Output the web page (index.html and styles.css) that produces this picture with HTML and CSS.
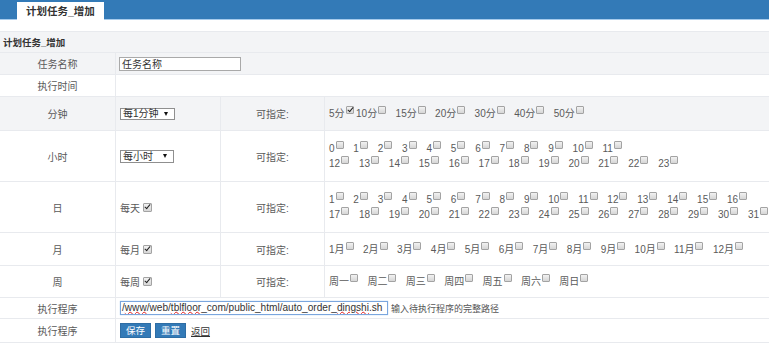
FILE: index.html
```html
<!DOCTYPE html>
<html>
<head>
<meta charset="utf-8">
<title>计划任务_增加</title>
<link rel="stylesheet" href="styles.css">
</head>
<body>
<div class="topbar">
	<div class="tab">计划任务_增加</div>
</div>

<div class="form">
	<div class="row head"><div class="cell">计划任务_增加</div></div>

	<div class="row h22 grey">
		<div class="cell lbl">任务名称</div>
		<div class="cell wide"><input class="txt" type="text" value="任务名称"></div>
	</div>

	<div class="row h22">
		<div class="cell lbl">执行时间</div>
		<div class="cell wide"></div>
	</div>

	<div class="row h34 grey">
		<div class="cell lbl">分钟</div>
		<div class="cell ctl"><span class="sel sel_min">每1分钟</span></div>
		<div class="cell lbl">可指定:</div>
		<div class="cell opts cn">
			<div class="line"><span class="o tight">5分<span class="cb on"></span></span><span class="o">10分<span class="cb"></span></span><span class="o">15分<span class="cb"></span></span><span class="o">20分<span class="cb"></span></span><span class="o">30分<span class="cb"></span></span><span class="o">40分<span class="cb"></span></span><span class="o">50分<span class="cb"></span></span></div>
		</div>
	</div>

	<div class="row h51">
		<div class="cell lbl">小时</div>
		<div class="cell ctl"><span class="sel sel_hour">每小时</span></div>
		<div class="cell lbl">可指定:</div>
		<div class="cell opts num">
			<div class="line"><span class="o">0<span class="cb"></span></span><span class="o">1<span class="cb"></span></span><span class="o">2<span class="cb"></span></span><span class="o">3<span class="cb"></span></span><span class="o">4<span class="cb"></span></span><span class="o">5<span class="cb"></span></span><span class="o">6<span class="cb"></span></span><span class="o">7<span class="cb"></span></span><span class="o">8<span class="cb"></span></span><span class="o">9<span class="cb"></span></span><span class="o">10<span class="cb"></span></span><span class="o">11<span class="cb"></span></span></div>
			<div class="line"><span class="o">12<span class="cb"></span></span><span class="o">13<span class="cb"></span></span><span class="o">14<span class="cb"></span></span><span class="o">15<span class="cb"></span></span><span class="o">16<span class="cb"></span></span><span class="o">17<span class="cb"></span></span><span class="o">18<span class="cb"></span></span><span class="o">19<span class="cb"></span></span><span class="o">20<span class="cb"></span></span><span class="o">21<span class="cb"></span></span><span class="o">22<span class="cb"></span></span><span class="o">23<span class="cb"></span></span></div>
		</div>
	</div>

	<div class="row h51">
		<div class="cell lbl">日</div>
		<div class="cell ctl">每天 <span class="cb on"></span></div>
		<div class="cell lbl">可指定:</div>
		<div class="cell opts num">
			<div class="line"><span class="o">1<span class="cb"></span></span><span class="o">2<span class="cb"></span></span><span class="o">3<span class="cb"></span></span><span class="o">4<span class="cb"></span></span><span class="o">5<span class="cb"></span></span><span class="o">6<span class="cb"></span></span><span class="o">7<span class="cb"></span></span><span class="o">8<span class="cb"></span></span><span class="o">9<span class="cb"></span></span><span class="o">10<span class="cb"></span></span><span class="o">11<span class="cb"></span></span><span class="o">12<span class="cb"></span></span><span class="o">13<span class="cb"></span></span><span class="o">14<span class="cb"></span></span><span class="o">15<span class="cb"></span></span><span class="o">16<span class="cb"></span></span></div>
			<div class="line"><span class="o">17<span class="cb"></span></span><span class="o">18<span class="cb"></span></span><span class="o">19<span class="cb"></span></span><span class="o">20<span class="cb"></span></span><span class="o">21<span class="cb"></span></span><span class="o">22<span class="cb"></span></span><span class="o">23<span class="cb"></span></span><span class="o">24<span class="cb"></span></span><span class="o">25<span class="cb"></span></span><span class="o">26<span class="cb"></span></span><span class="o">27<span class="cb"></span></span><span class="o">28<span class="cb"></span></span><span class="o">29<span class="cb"></span></span><span class="o">30<span class="cb"></span></span><span class="o">31<span class="cb"></span></span></div>
		</div>
	</div>

	<div class="row h33">
		<div class="cell lbl">月</div>
		<div class="cell ctl">每月 <span class="cb on"></span></div>
		<div class="cell lbl">可指定:</div>
		<div class="cell opts cn">
			<div class="line"><span class="o">1月<span class="cb"></span></span><span class="o">2月<span class="cb"></span></span><span class="o">3月<span class="cb"></span></span><span class="o">4月<span class="cb"></span></span><span class="o">5月<span class="cb"></span></span><span class="o">6月<span class="cb"></span></span><span class="o">7月<span class="cb"></span></span><span class="o">8月<span class="cb"></span></span><span class="o">9月<span class="cb"></span></span><span class="o">10月<span class="cb"></span></span><span class="o">11月<span class="cb"></span></span><span class="o">12月<span class="cb"></span></span></div>
		</div>
	</div>

	<div class="row h32">
		<div class="cell lbl">周</div>
		<div class="cell ctl">每周 <span class="cb on"></span></div>
		<div class="cell lbl">可指定:</div>
		<div class="cell opts cn">
			<div class="line"><span class="o">周一<span class="cb"></span></span><span class="o">周二<span class="cb"></span></span><span class="o">周三<span class="cb"></span></span><span class="o">周四<span class="cb"></span></span><span class="o">周五<span class="cb"></span></span><span class="o">周六<span class="cb"></span></span><span class="o">周日<span class="cb"></span></span></div>
		</div>
	</div>

	<div class="row h21">
		<div class="cell lbl">执行程序</div>
		<div class="cell wide ctl">
			<span class="path">/<span class="sp">www</span>/web/<span class="sp">tblfloor</span>_com/public_html/auto_order_<span class="sp">dingshi</span>.sh</span>
			<span class="hint">输入待执行程序的完整路径</span>
		</div>
	</div>

	<div class="row h24">
		<div class="cell lbl">执行程序</div>
		<div class="cell wide ctl">
			<button type="button" class="btn">保存</button>
			<button type="button" class="btn">重置</button>
			<a href="#" class="back">返回</a>
		</div>
	</div>
</div>
</body>
</html>
```
FILE: styles.css
```css
body {
	margin: 0;
	font-family: "Liberation Sans", "Noto Sans CJK SC", sans-serif;
	font-size: 10px;
	color: #5a5a5a;
	background: #fff;
}
.topbar {
	height: 19px;
	background: #337ab7;
	border-bottom: 1px solid #a7cbec;
	display: flex;
	align-items: flex-end;
	padding-left: 17px;
}
.tab {
	width: 87px;
	height: 18px;
	box-sizing: border-box;
	background: #fff;
	padding-left: 9px;
	font-size: 10.5px;
	font-weight: bold;
	color: #333;
	line-height: 18px;
	margin-bottom: -1px;
}
.form {
	margin-top: 11px;
	border-top: 1px solid #e8eaee;
}
.row {
	display: grid;
	grid-template-columns: 115px 105px 104px 1fr;
	border-bottom: 1px solid #e8eaee;
	box-sizing: border-box;
}
.grey {
	background: #f3f4f6;
}
.head {
	display: block;
	height: 21px;
	background: #f3f4f6;
}
.head .cell {
	border: 0;
	padding-left: 3px;
	font-size: 9.5px;
	font-weight: bold;
	color: #333;
	height: 20px;
}
.h22 { height: 22px; }
.h34 { height: 34px; }
.h51 { height: 51px; }
.h33 { height: 33px; }
.h32 { height: 32px; }
.h21 { height: 21px; }
.h24 { height: 24px; }
.cell {
	display: flex;
	align-items: center;
	border-left: 1px solid #e8eaee;
	min-width: 0;
}
.cell:first-child {
	border-left: 0;
}
.wide {
	grid-column: span 3;
}
.lbl {
	justify-content: center;
}
.ctl {
	padding-left: 4px;
}
.txt {
	margin: 0 0 0 3px;
	width: 122px;
	height: 14px;
	box-sizing: border-box;
	border: 1px solid #a9a9a9;
	padding: 0 2px;
	font-family: inherit;
	font-size: 10px;
	color: #333;
	background: #fff;
}
.sel {
	position: relative;
	display: inline-block;
	box-sizing: border-box;
	height: 12px;
	line-height: 10px;
	border: 1px solid #8f8f8f;
	background: #fff;
	padding-left: 2px;
	color: #333;
}
.sel_min { width: 55px; }
.sel_hour { width: 54px; height: 13px; line-height: 11px; }
.sel::after {
	content: "";
	position: absolute;
	right: 6px;
	top: 3px;
	border-left: 2.5px solid transparent;
	border-right: 2.5px solid transparent;
	border-top: 4px solid #111;
}
.opts {
	flex-direction: column;
	align-items: flex-start;
	justify-content: center;
	padding-left: 4px;
	overflow: hidden;
}
.line {
	line-height: 15px;
	white-space: nowrap;
}
.o {
	display: inline-block;
}
.num .o { margin-right: 9.8px; }
.cn .o { margin-right: 9.4px; }
.cn .o.tight { margin-right: 2.5px; }
.cb {
	display: inline-block;
	width: 6px;
	height: 6px;
	border: 1px solid #a3a3a3;
	border-radius: 1px;
	background: linear-gradient(#f2f2f2, #d6d6d6);
	margin-left: 1px;
	vertical-align: 3px;
	position: relative;
}
.cb.on::after {
	content: "";
	position: absolute;
	left: 2px;
	top: -1px;
	width: 2px;
	height: 5px;
	border-right: 1.5px solid #222;
	border-bottom: 1.5px solid #222;
	transform: rotate(40deg);
}
.ctl .cb {
	margin-left: 3px;
	width: 7px;
	height: 7px;
}
.path {
	display: inline-block;
	box-sizing: border-box;
	width: 268px;
	height: 14px;
	line-height: 11px;
	border: 1px solid #7aa6de;
	box-shadow: 0 0 1px #9cc0ec;
	padding-left: 1px;
	font-size: 10.1px;
	color: #333;
	white-space: nowrap;
	overflow: hidden;
}
.sp {
	text-decoration: underline wavy #e02020;
	text-decoration-thickness: 1px;
	text-underline-offset: 0;
}
.hint {
	margin-left: 3px;
	font-size: 9px;
	color: #555;
}
.btn {
	height: 15px;
	width: 31px;
	margin: 0 4px 0 0;
	padding: 0;
	border: 1px solid #2e6da4;
	background: #337ab7;
	color: #fff;
	font-family: inherit;
	font-size: 9.5px;
	line-height: 13px;
}
.back {
	margin-left: 1px;
	color: #333;
	font-size: 9.5px;
}
```
